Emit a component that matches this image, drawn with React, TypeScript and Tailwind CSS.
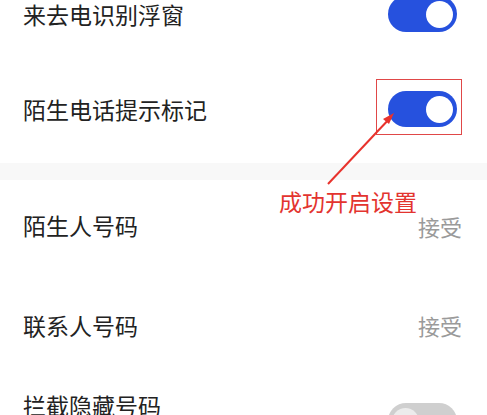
import React from "react";

function Toggle({ on }: { on: boolean }) {
  return (
    <div
      className={`flex h-[36px] w-[69px] items-center rounded-full px-[4px] ${
        on ? "justify-end bg-[#2651de]" : "justify-start bg-[#cfcfcf]"
      }`}
    >
      <div className={`h-[27px] w-[27px] rounded-full ${on ? "bg-white" : "bg-[#ececec]"}`} />
    </div>
  );
}

export default function App() {
  return (
    <div
      className="relative h-[415px] w-[487px] overflow-hidden bg-white text-[#222]"
      style={{ fontFamily: '"Noto Sans CJK SC", "Noto Sans", sans-serif' }}
    >
      {/* ── Section 1 ── */}
      <div className="mt-[-34px]">
        <div className="flex h-[96px] items-center justify-between pl-[23px] pr-[30px]">
          <span className="text-[23px] leading-none">来去电识别浮窗</span>
          <Toggle on />
        </div>
        <div className="flex h-[101px] items-center justify-between pb-[7px] pl-[23px] pr-[30px]">
          <span className="text-[23px] leading-none">陌生电话提示标记</span>
          <div className="relative">
            <Toggle on />
            {/* highlight box */}
            <div className="absolute -bottom-[8px] -left-[12px] -right-[5px] -top-[12px] border-[1.5px] border-[#e04848]" />
          </div>
        </div>
      </div>

      {/* band */}
      <div className="h-[17px] bg-[#f8f8f8]" />

      {/* ── Section 2 ── */}
      <div className="flex h-[94px] items-center justify-between pb-[3px] pl-[23px] pr-[25px]">
        <span className="text-[23px] leading-none">陌生人号码</span>
        <span className="text-[22px] leading-none text-[#9a9a9a]">接受</span>
      </div>
      <div className="flex h-[102px] items-center justify-between pl-[23px] pr-[25px]">
        <span className="text-[23px] leading-none">联系人号码</span>
        <span className="text-[22px] leading-none text-[#9a9a9a]">接受</span>
      </div>
      <div className="flex items-start justify-between pl-[23px] pr-[30px] pt-[17px]">
        <span className="text-[23px] leading-[24px]">拦截隐藏号码</span>
        <div className="mt-[10px]">
          <Toggle on={false} />
        </div>
      </div>

      {/* ── Annotation ── */}
      <svg className="absolute left-0 top-0" width="487" height="415" viewBox="0 0 487 415">
        <line x1="328" y1="184" x2="391" y2="117" stroke="#e8322c" strokeWidth="2" />
        <path d="M394 113 L383 119 L389 124 Z" fill="#e8322c" />
      </svg>
      <div className="absolute left-[279px] top-[188px] text-[23px] leading-[26px] text-[#e3342f]">
        成功开启设置
      </div>
    </div>
  );
}
